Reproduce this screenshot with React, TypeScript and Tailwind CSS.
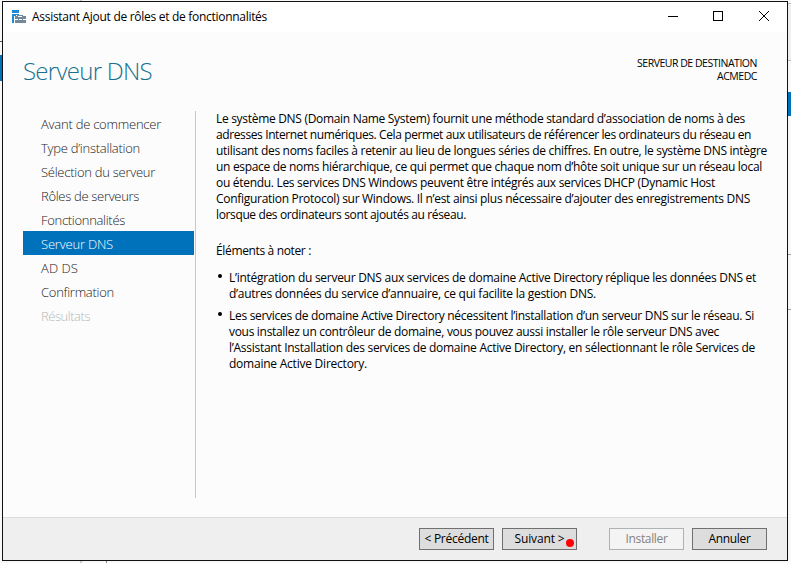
import { useLayoutEffect, useRef, useState } from "react";

const font = "font-['Open_Sans','Noto_Sans',sans-serif]";

// A single line of text whose tracking is computed so that it spans the given width.
function Line({ text, width, className = "" }: { text: string; width: number; className?: string }) {
  const ref = useRef<HTMLSpanElement>(null);
  const [spacing, setSpacing] = useState(0);
  useLayoutEffect(() => {
    const measure = () => {
      const el = ref.current;
      if (!el) return;
      el.style.letterSpacing = "0px";
      const natural = el.getBoundingClientRect().width;
      const value = (width - natural) / text.length;
      el.style.letterSpacing = `${value}px`;
      setSpacing(value);
    };
    measure();
    document.fonts.ready.then(measure);
  }, [text, width]);
  return (
    <span className={`block w-fit whitespace-pre ${className}`} ref={ref} style={{ letterSpacing: `${spacing}px` }}>
      {text}
    </span>
  );
}

const steps: [string, number][] = [
  ["Avant de commencer", 120],
  ["Type d’installation", 99],
  ["Sélection du serveur", 114],
  ["Rôles de serveurs", 98],
  ["Fonctionnalités", 84],
  ["Serveur DNS", 72],
  ["AD DS", 37],
  ["Confirmation", 73],
  ["Résultats", 49],
];

const intro: [string, number][] = [
  ["Le système DNS (Domain Name System) fournit une méthode standard d’association de noms à des", 529],
  ["adresses Internet numériques. Cela permet aux utilisateurs de référencer les ordinateurs du réseau en", 535],
  ["utilisant des noms faciles à retenir au lieu de longues séries de chiffres. En outre, le système DNS intègre", 551],
  ["un espace de noms hiérarchique, ce qui permet que chaque nom d’hôte soit unique sur un réseau local", 546],
  ["ou étendu. Les services DNS Windows peuvent être intégrés aux services DHCP (Dynamic Host", 499],
  ["Configuration Protocol) sur Windows. Il n’est ainsi plus nécessaire d’ajouter des enregistrements DNS", 534],
  ["lorsque des ordinateurs sont ajoutés au réseau.", 250],
];

const notes: [string, number][][] = [
  [
    ["L’intégration du serveur DNS aux services de domaine Active Directory réplique les données DNS et", 527],
    ["d’autres données du service d’annuaire, ce qui facilite la gestion DNS.", 367],
  ],
  [
    ["Les services de domaine Active Directory nécessitent l’installation d’un serveur DNS sur le réseau. Si", 525],
    ["vous installez un contrôleur de domaine, vous pouvez aussi installer le rôle serveur DNS avec", 490],
    ["l’Assistant Installation des services de domaine Active Directory, en sélectionnant le rôle Services de", 526],
    ["domaine Active Directory.", 138],
  ],
];

function WizardIcon() {
  return (
    <svg width="16" height="16" viewBox="0 0 16 16" shapeRendering="crispEdges">
      <path fill="#1e8ad6" d="M1 1h7v3H1zM1 5h7v1H5v1H3v7H1z" />
      <path fill="#71899a" d="M6 6h6v1h3v7H4V7h2z" />
      <path fill="#fff" d="M7 7h4v1H7zM4 10h3v1H4zM8 10h3v1H8zM12 10h3v1h-3z" />
    </svg>
  );
}

export default function App() {
  return (
    <div className={`relative h-[563px] w-[791px] overflow-hidden bg-[#f8f8f8] text-xs text-black ${font}`}>
      <div className="absolute left-0 top-[55px] h-[26px] w-[2px] bg-[#0072bc]" />
      <div className="absolute left-0 top-[41px] h-px w-[2px] bg-[#555]" />
      <div className="absolute left-[788px] top-[92px] h-6 w-[3px] bg-[#0072bc]" />
      <div className="absolute left-[788px] top-[3px] h-[58px] w-[3px] border-y border-[#bbb] bg-[#eee]" />
      <div className="absolute left-[788px] top-[254px] h-[56px] w-[3px] border-y border-[#999]" />
      <div className="absolute left-[80px] top-0 h-px w-[2px] bg-[#ccc]" />
      <div className="absolute left-[80px] top-[561px] h-[2px] w-[2px] bg-[#ccc]" />
      <div className="absolute left-[106px] top-[561px] h-[2px] w-px bg-[#888]" />

      <main className="relative ml-[2px] mt-px flex h-[560px] w-[786px] flex-col border border-[#111] bg-[#fcfcfc]">
        <header className="flex h-[30px] shrink-0 items-center bg-white pl-2">
          <WizardIcon />
          <div className="ml-[5px] flex-1">
            <Line text="Assistant Ajout de rôles et de fonctionnalités" width={235} />
          </div>
          <svg width="120" height="30" fill="none" stroke="#000" shapeRendering="crispEdges">
            <path d="M1 14.5h10M46.5 9.5h9v9h-9z" />
            <path d="M92 9l10 10M102 9L92 19" shapeRendering="auto" />
          </svg>
        </header>

        <div className="flex h-[79px] shrink-0 justify-between pl-5 pr-[30px]">
          <h1 className="pt-[23px] text-[24px] font-light leading-8 text-[#16718f]">
            <Line text="Serveur DNS" width={129} />
          </h1>
          <div className="flex flex-col items-end pt-[25px] text-[10.5px] leading-[13px]">
            <Line text="SERVEUR DE DESTINATION" width={120} />
            <Line text="ACMEDC" width={40} />
          </div>
        </div>

        <div className="flex h-[406px] shrink-0 pl-5">
          <nav className="mr-px h-[387px] w-[172px] text-[13px] font-light leading-6">
            {steps.map(([name, width], i) => (
              <div
                key={name}
                className={`h-6 w-[171px] pl-[18px] pt-px ${
                  i === 5 ? "bg-[#0072bc] text-white" : i === 8 ? "text-[#b8b8b8]" : "text-[#222]"
                }`}
              >
                <Line text={name} width={width} />
              </div>
            ))}
          </nav>
          <div className="-ml-px h-[387px] w-px bg-[#c8c8c8]" />
          <article className="pl-5 leading-4">
            {intro.map(([text, width]) => (
              <Line key={text} text={text} width={width} />
            ))}
            <div className="mb-[11px] mt-5">
              <Line text="Éléments à noter :" width={95} />
            </div>
            <ul>
              {notes.map((lines, i) => (
                <li key={i} className="mb-1.5 flex">
                  <span className="ml-[2px] mr-[7px] mt-[4px] size-1 rounded-full bg-black" />
                  <div>
                    {lines.map(([text, width]) => (
                      <Line key={text} text={text} width={width} />
                    ))}
                  </div>
                </li>
              ))}
            </ul>
          </article>
        </div>

        <footer className="flex flex-1 items-start border-t border-[#dcdcdc] bg-[#efefef] pl-[416px] pt-[10px]">
          <button className="flex h-[22px] w-[75px] items-center justify-center border border-[#707070] bg-[#ddd]">
            <Line text="< Précédent" width={64} />
          </button>
          <button className="relative ml-2 flex h-[22px] w-[75px] items-center justify-center border border-[#707070] bg-[#ddd]">
            <Line text="Suivant >" width={50} />
            <span className="absolute bottom-[2px] right-[2px] size-2 rounded-full bg-[#f00]" />
          </button>
          <button className="ml-8 flex h-[22px] w-[75px] items-center justify-center border border-[#adb2b5] bg-[#f4f4f4] text-[#838383]">
            <Line text="Installer" width={42} />
          </button>
          <button className="ml-2 flex h-[22px] w-[75px] items-center justify-center border border-[#707070] bg-[#ddd]">
            <Line text="Annuler" width={42} />
          </button>
        </footer>
      </main>
    </div>
  );
}
